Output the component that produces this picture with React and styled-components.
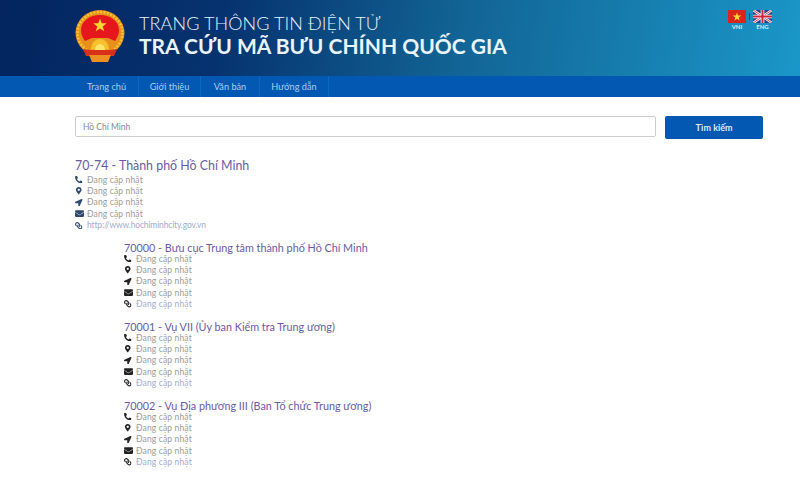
import React from 'react';
import styled, { createGlobalStyle } from 'styled-components';
import { FaPhone, FaMapMarkerAlt, FaLocationArrow, FaEnvelope, FaLink } from 'react-icons/fa';

const GlobalStyle = createGlobalStyle`
  html, body { margin: 0; padding: 0; background: #fff; }
  body { font-family: Lato, "Open Sans", sans-serif; overflow: hidden; }
  * { box-sizing: border-box; }
`;

const SCHeader = styled.header`
  height: 76px;
  padding: 0 28px 0 75px;
  display: flex;
  align-items: flex-start;
  background: linear-gradient(100deg, #03245f 0%, #06336f 28%, #126596 58%, #1a97c8 100%);
`;

const SCEmblem = styled.svg`
  width: 50px;
  height: 52px;
  margin-top: 10px;
  margin-right: 14px;
  flex: none;
`;

const SCTitle = styled.div`
  color: #e9f4fb;
  margin-top: 13px;
  flex: 1;
`;

const SCTitleTop = styled.div`
  font-size: 18px;
  line-height: 20px;
  font-weight: 300;
  letter-spacing: 0.1px;
`;

const SCTitleMain = styled.div`
  font-size: 21px;
  line-height: 25px;
  font-weight: 700;
  letter-spacing: 0;
`;

const SCLangs = styled.div`
  display: flex;
  gap: 3px;
  margin-top: 10px;
`;

const SCLang = styled.div`
  display: flex;
  flex-direction: column;
  align-items: center;
  font-size: 6px;
  font-weight: 700;
  line-height: 8px;
  color: #dcecf5;
`;

const SCLangDivider = styled.span`
  width: 1px;
  height: 7px;
  margin-top: 3px;
  background: #0d4a72;
`;

const SCNav = styled.nav`
  height: 21px;
  padding-left: 75px;
  display: flex;
  background: #0358b1;
`;

const SCNavItem = styled.a`
  width: ${(props) => props.$width}px;
  text-align: center;
  line-height: 21px;
  font-size: 9.2px;
  color: #a9cdec;
  border-right: 1px solid #0b68c0;
`;

const SCMain = styled.main`
  padding: 19px 37px 0 75px;
`;

const SCSearch = styled.form`
  display: flex;
  align-items: flex-start;
  gap: 9px;
  margin-bottom: 18px;
`;

const SCInput = styled.input`
  flex: 1;
  height: 21px;
  padding: 0 7px;
  border: 1px solid #ccc;
  border-radius: 2px;
  font-family: inherit;
  font-size: 8.5px;
  color: #888;
`;

const SCButton = styled.button`
  width: 98px;
  height: 23px;
  border: 0;
  border-radius: 2px;
  background: #0358b1;
  color: #dcecf8;
  font-family: inherit;
  font-size: 9px;
  font-weight: 700;
`;

const SCProvince = styled.section`
  margin-bottom: 11px;
`;

const SCProvinceTitle = styled.h2`
  margin: 0;
  font-size: 12.4px;
  line-height: 17px;
  font-weight: 400;
  color: #6a5aa6;
`;

const SCOffice = styled.section`
  margin: 0 0 11px 49px;
`;

const SCOfficeTitle = styled.h3`
  margin: 0 0 -1px;
  font-size: 10.8px;
  line-height: 12px;
  font-weight: 400;
  color: #6a5aa6;
`;

const SCRow = styled.div`
  height: 11.4px;
  display: flex;
  align-items: center;
  font-size: 8.5px;
  color: ${(props) => (props.$link ? '#a3abd0' : '#9a9a9a')};
  letter-spacing: 0.15px;

  svg {
    width: 7.5px;
    height: 7.5px;
    margin-right: 4.5px;
    color: ${(props) => props.$iconColor};
    flex: none;
  }
`;

const SCUrl = styled.span`
  letter-spacing: -0.15px;
`;

const SCPhone = styled(FaPhone)`
  transform: scaleX(-1);
`;

const SCChain = styled(FaLink)`
  transform: scaleX(-1);
`;

const SCMail = styled(FaEnvelope)`
  && {
    width: 9px;
    height: 9px;
    margin-right: 3px;
  }
`;

const Emblem = () => (
  <SCEmblem viewBox="0 0 50 52">
    <ellipse cx="25" cy="23" rx="24.5" ry="23" fill="#e8901c" />
    <ellipse cx="25" cy="23" rx="22.5" ry="21" fill="none" stroke="#f8c733" strokeWidth="2.4" strokeDasharray="2 1.4" />
    <path d="M6 20 C6 11 15 5 25 5 C35 5 44 11 44 20 C44 25 42 28 40 31 L33 28 L17 28 L10 31 C8 28 6 25 6 20z" fill="#e5171d" />
    <polygon points="25,8.5 26.7,13.2 31.7,13.3 27.7,16.4 29.2,21.2 25,18.4 20.8,21.2 22.3,16.4 18.3,13.3 23.3,13.2" fill="#fbd92f" />
    <path d="M15.5 40 a9.5 11.5 0 0 1 19 0z" fill="#f7c12e" stroke="#e8901c" strokeWidth=".8" />
    <path d="M20 40 a5 6 0 0 1 10 0z" fill="#fbe46c" />
    <path d="M8 39 L16 40 H34 L42 39 L39 46 H11z" fill="#d9301c" />
    <path d="M14 45 H36 L33 52 H17z" fill="#ee8f22" />
  </SCEmblem>
);

const FlagVn = () => (
  <svg width="18" height="13" viewBox="0 0 18 13">
    <rect width="18" height="13" fill="#da251d" />
    <polygon points="9,2.5 10,5.6 13.3,5.6 10.6,7.5 11.6,10.6 9,8.7 6.4,10.6 7.4,7.5 4.7,5.6 8,5.6" fill="#ffdc2e" />
  </svg>
);

const FlagUk = () => (
  <svg width="19" height="13" viewBox="0 0 19 13">
    <rect width="19" height="13" fill="#2b3f85" />
    <path d="M0 0 L19 13 M19 0 L0 13" stroke="#fff" strokeWidth="2.4" />
    <path d="M0 0 L19 13 M19 0 L0 13" stroke="#c9243a" strokeWidth="0.9" />
    <path d="M9.5 0 V13 M0 6.5 H19" stroke="#fff" strokeWidth="3.6" />
    <path d="M9.5 0 V13 M0 6.5 H19" stroke="#c9243a" strokeWidth="2" />
  </svg>
);

const NAV = [
  { label: 'Trang chủ', width: 64 },
  { label: 'Giới thiệu', width: 62 },
  { label: 'Văn bản', width: 59 },
  { label: 'Hướng dẫn', width: 69 },
];

const PENDING = 'Đang cập nhật';

const OFFICES = [
  '70000 - Bưu cục Trung tâm thành phố Hồ Chí Minh',
  '70001 - Vụ VII (Ủy ban Kiểm tra Trung ương)',
  '70002 - Vụ Địa phương III (Ban Tổ chức Trung ương)',
];

const Details = ({ link, iconColor = '#222' }) => (
  <>
    <SCRow $iconColor={iconColor}><SCPhone />{PENDING}</SCRow>
    <SCRow $iconColor={iconColor}><FaMapMarkerAlt />{PENDING}</SCRow>
    <SCRow $iconColor={iconColor}><FaLocationArrow />{PENDING}</SCRow>
    <SCRow $iconColor={iconColor}><SCMail />{PENDING}</SCRow>
    <SCRow $iconColor={iconColor} $link><SCChain />{link}</SCRow>
  </>
);

const App = () => (
  <>
    <GlobalStyle />
    <SCHeader>
      <Emblem />
      <SCTitle>
        <SCTitleTop>TRANG THÔNG TIN ĐIỆN TỬ</SCTitleTop>
        <SCTitleMain>TRA CỨU MÃ BƯU CHÍNH QUỐC GIA</SCTitleMain>
      </SCTitle>
      <SCLangs>
        <SCLang><FlagVn />VNI</SCLang>
        <SCLangDivider />
        <SCLang><FlagUk />ENG</SCLang>
      </SCLangs>
    </SCHeader>
    <SCNav>
      {NAV.map((item) => <SCNavItem key={item.label} $width={item.width}>{item.label}</SCNavItem>)}
    </SCNav>
    <SCMain>
      <SCSearch onSubmit={(e) => e.preventDefault()}>
        <SCInput defaultValue="Hồ Chí Minh" />
        <SCButton>Tìm kiếm</SCButton>
      </SCSearch>
      <SCProvince>
        <SCProvinceTitle>70-74 - Thành phố Hồ Chí Minh</SCProvinceTitle>
        <Details link={<SCUrl>http://www.hochiminhcity.gov.vn</SCUrl>} iconColor="#2f4a6e" />
      </SCProvince>
      {OFFICES.map((title) => (
        <SCOffice key={title}>
          <SCOfficeTitle>{title}</SCOfficeTitle>
          <Details link={PENDING} />
        </SCOffice>
      ))}
    </SCMain>
  </>
);

export default App;
